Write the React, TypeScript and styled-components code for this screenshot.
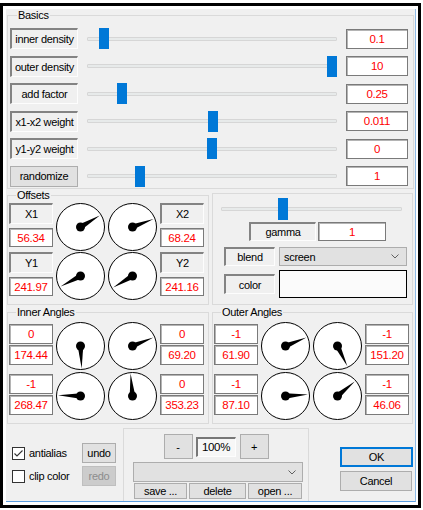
import { Fragment } from 'react';
import styled, { createGlobalStyle } from 'styled-components';

const GlobalStyle = createGlobalStyle`
  html, body { margin: 0; padding: 0; background: #fff; }
  body {
    font-family: "Liberation Sans", Arial, sans-serif;
    font-size: 11px;
    letter-spacing: -0.3px;
    color: #000;
  }
  * { box-sizing: border-box; }
`;

type SliderRow = { label: string; pos: number; value: string; button?: boolean };
type DialRow = { left: [string, string]; dials: [number, number]; right: [string, string] };

const basics: SliderRow[] = [
  { label: 'inner density', pos: 0.05, value: '0.1' },
  { label: 'outer density', pos: 1, value: '10' },
  { label: 'add factor', pos: 0.125, value: '0.25' },
  { label: 'x1-x2 weight', pos: 0.504, value: '0.011' },
  { label: 'y1-y2 weight', pos: 0.5, value: '0' },
  { label: 'randomize', pos: 0.2, value: '1', button: true },
];

const offsets: DialRow[] = [
  { left: ['X1', '56.34'], dials: [31, 21], right: ['X2', '68.24'] },
  { left: ['Y1', '241.97'], dials: [208, 211], right: ['Y2', '241.16'] },
];

const innerAngles: DialRow[] = [
  { left: ['0', '174.44'], dials: [273, 22], right: ['0', '69.20'] },
  { left: ['-1', '268.47'], dials: [178, 95], right: ['0', '353.23'] },
];

const outerAngles: DialRow[] = [
  { left: ['-1', '61.90'], dials: [22, 296], right: ['-1', '151.20'] },
  { left: ['-1', '87.10'], dials: [4, 40], right: ['-1', '46.06'] },
];

function Slider({ pos, height }: { pos: number; height: number }) {
  return (
    <SliderBox $h={height}>
      <Track />
      <Thumb $h={height} style={{ left: `calc(${pos} * (100% - 10px))` }} />
    </SliderBox>
  );
}

function Dial({ angle }: { angle: number }) {
  const cx = 24.5;
  const cy = 24;
  const rad = (angle * Math.PI) / 180;
  const dx = Math.cos(rad);
  const dy = -Math.sin(rad);
  const len = 22.5;
  const w = 2.8;
  const pts = [
    [cx - dy * w, cy + dx * w],
    [cx + dx * len, cy + dy * len],
    [cx + dy * w, cy - dx * w],
  ];
  return (
    <svg width={49} height={48} viewBox="0 0 49 48">
      <ellipse cx={cx} cy={cy} rx={24} ry={23.5} fill="#fff" stroke="#000" strokeWidth={1} />
      <polygon points={pts.map(p => p.join(',')).join(' ')} fill="#000" />
      <circle cx={cx} cy={cy} r={4.5} fill="#000" />
    </svg>
  );
}

function Chevron() {
  return (
    <svg width={8} height={5} viewBox="0 0 8 5">
      <path d="M0.5 0.5 L4 4 L7.5 0.5" fill="none" stroke="#606060" strokeWidth={1} />
    </svg>
  );
}

function DialBlock({ rows, captioned }: { rows: DialRow[]; captioned: boolean }) {
  const stack = (pair: [string, string]) =>
    captioned ? (
      <BoxStack $gap={4} $top={0}>
        <Caption $h={21}>{pair[0]}</Caption>
        <Readout $h={19}>{pair[1]}</Readout>
      </BoxStack>
    ) : (
      <BoxStack $gap={1} $top={2}>
        <Readout $h={20}>{pair[0]}</Readout>
        <Readout $h={20}>{pair[1]}</Readout>
      </BoxStack>
    );
  return (
    <DialGrid $rowGap={captioned ? 1 : 2}>
      {rows.map((row, i) => (
        <Fragment key={i}>
          {stack(row.left)}
          <Dial angle={row.dials[0]} />
          <Dial angle={row.dials[1]} />
          {stack(row.right)}
        </Fragment>
      ))}
    </DialGrid>
  );
}

export default function App() {
  return (
    <>
      <GlobalStyle />
      <Frame>
        <Panel>
          <Group>
            <Legend>Basics</Legend>
            <BasicsGrid>
              {basics.map(row => (
                <Fragment key={row.label}>
                  {row.button ? (
                    <PushButton $h={21}>{row.label}</PushButton>
                  ) : (
                    <Caption $h={21}>{row.label}</Caption>
                  )}
                  <Slider pos={row.pos} height={21} />
                  <Readout $h={20}>{row.value}</Readout>
                </Fragment>
              ))}
            </BasicsGrid>
          </Group>

          <SplitRow>
            <Group $w={202} $pad="1px 0 4px 1px">
              <Legend>Offsets</Legend>
              <DialBlock rows={offsets} captioned />
            </Group>
            <Group $w={201} $pad="4px 10px 0 8px" $mt={4}>
              <Slider pos={0.333} height={22} />
              <GammaRow>
                <Caption $h={19} $w={67}>gamma</Caption>
                <Readout $h={19} $w={68}>1</Readout>
              </GammaRow>
              <PairRow $mt={6} $h={19}>
                <Caption $h={19}>blend</Caption>
                <Select $h={19} $pr={7}>
                  <span>screen</span>
                  <Chevron />
                </Select>
              </PairRow>
              <PairRow $mt={4} $h={28}>
                <Caption $h={20}>color</Caption>
                <Swatch />
              </PairRow>
            </Group>
          </SplitRow>

          <SplitRow $mt={1}>
            <Group $w={202} $pad="3px 0 3px 1px">
              <Legend>Inner Angles</Legend>
              <DialBlock rows={innerAngles} captioned={false} />
            </Group>
            <Group $w={201} $pad="3px 0 3px 1px">
              <Legend>Outer Angles</Legend>
              <DialBlock rows={outerAngles} captioned={false} />
            </Group>
          </SplitRow>

          <BottomRow>
            <Options>
              <CheckLine>
                <CheckBox>
                  <svg width={11} height={11} viewBox="0 0 11 11">
                    <path d="M1.5 5.5 L4 8 L9.5 2.5" fill="none" stroke="#333" strokeWidth={1.1} />
                  </svg>
                </CheckBox>
                antialias
              </CheckLine>
              <PushButton $h={20}>undo</PushButton>
              <CheckLine>
                <CheckBox />
                clip color
              </CheckLine>
              <PushButton $h={20} $disabled>redo</PushButton>
            </Options>

            <Presets>
              <ZoomRow>
                <PushButton $h={25} $w={29}>-</PushButton>
                <ZoomField>100%</ZoomField>
                <PushButton $h={25} $w={29}>+</PushButton>
              </ZoomRow>
              <Select $h={20} $pr={6} $m="3px 5px 0 9px">
                <span />
                <Chevron />
              </Select>
              <FileButtons>
                <PushButton $h={16}>save ...</PushButton>
                <PushButton $h={16}>delete</PushButton>
                <PushButton $h={16}>open ...</PushButton>
              </FileButtons>
            </Presets>

            <Actions>
              <PushButton $h={20} $w={73} $default>OK</PushButton>
              <PushButton $h={20} $w={72}>Cancel</PushButton>
            </Actions>
          </BottomRow>
        </Panel>
      </Frame>
    </>
  );
}

const Frame = styled.div`
  width: 421px;
  height: 505px;
  margin-top: 3px;
  border: 3px solid #000;
  background: #fff;
  padding: 3px 2px 3px 3px;
  display: flex;
`;

const Panel = styled.div`
  flex: 1;
  display: flex;
  flex-direction: column;
  background: #f0f0f0;
  border-right: 1px solid #8fbbe6;
  border-bottom: 1px solid #5b9de0;
  padding: 0 1px 0 1px;
`;

const Group = styled.fieldset<{ $w?: number; $pad?: string; $mt?: number }>`
  margin: ${p => p.$mt ?? 0}px 0 0 0;
  min-width: 0;
  width: ${p => (p.$w ? `${p.$w}px` : 'auto')};
  padding: ${p => p.$pad ?? '6px 0 1.5px 2px'};
  border: 1px solid #dadada;
`;

const Legend = styled.legend`
  margin-left: 7px;
  padding: 0 1px;
  font-size: 11px;
  line-height: 13px;
`;

const BasicsGrid = styled.div`
  display: grid;
  grid-template-columns: 68px 250px 62px;
  grid-auto-rows: 21px;
  column-gap: 9px;
  row-gap: 6.5px;
  align-items: center;
`;

const SplitRow = styled.div<{ $mt?: number }>`
  display: flex;
  gap: 3px;
  margin-top: ${p => p.$mt ?? 0}px;
`;

const Caption = styled.div<{ $h: number; $w?: number }>`
  height: ${p => p.$h}px;
  width: ${p => (p.$w ? `${p.$w}px` : 'auto')};
  border-style: solid;
  border-width: 2px 1px 1px 2px;
  border-color: #838383 #fdfdfd #fdfdfd #838383;
  background: #f0f0f0;
  display: flex;
  align-items: center;
  justify-content: center;
  white-space: nowrap;
`;

const Readout = styled.div<{ $h: number; $w?: number }>`
  height: ${p => p.$h}px;
  width: ${p => (p.$w ? `${p.$w}px` : 'auto')};
  background: #fff;
  border: 1px solid #7a7a7a;
  box-shadow: inset 1px 1px 0 #b4b4b4;
  color: #ff0000;
  font-size: 11.5px;
  display: flex;
  align-items: center;
  justify-content: center;
`;

const PushButton = styled.button<{ $h: number; $w?: number; $disabled?: boolean; $default?: boolean }>`
  height: ${p => p.$h}px;
  width: ${p => (p.$w ? `${p.$w}px` : 'auto')};
  margin: 0;
  padding: 0;
  font: inherit;
  letter-spacing: inherit;
  color: ${p => (p.$disabled ? '#8d8d8d' : '#000')};
  background: ${p => (p.$disabled ? '#cccccc' : '#e1e1e1')};
  border: 1px solid ${p => (p.$default ? '#0078d7' : p.$disabled ? '#bfbfbf' : '#adadad')};
  box-shadow: ${p => (p.$default ? 'inset 0 0 0 1px #0078d7' : 'none')};
  display: flex;
  align-items: center;
  justify-content: center;
  white-space: nowrap;
`;

const SliderBox = styled.div<{ $h: number }>`
  position: relative;
  height: ${p => p.$h}px;
`;

const Track = styled.div`
  position: absolute;
  left: 0;
  right: 0;
  top: 50%;
  height: 4px;
  margin-top: -2px;
  background: #e7eaea;
  border: 1px solid #d6d6d6;
  border-radius: 1px;
`;

const Thumb = styled.div<{ $h: number }>`
  position: absolute;
  top: 0;
  width: 10px;
  height: ${p => p.$h}px;
  background: #0078d7;
`;

const DialGrid = styled.div<{ $rowGap: number }>`
  display: grid;
  grid-template-columns: 44px 49px 49px 44px;
  grid-auto-rows: 48px;
  column-gap: 3px;
  row-gap: ${p => p.$rowGap}px;
`;

const BoxStack = styled.div<{ $gap: number; $top: number }>`
  display: flex;
  flex-direction: column;
  gap: ${p => p.$gap}px;
  padding-top: ${p => p.$top}px;
`;

const GammaRow = styled.div`
  display: flex;
  gap: 2px;
  margin: 2px 0 0 28px;
`;

const PairRow = styled.div<{ $mt: number; $h: number }>`
  display: grid;
  grid-template-columns: 51px 128px;
  column-gap: 4px;
  align-items: center;
  height: ${p => p.$h}px;
  margin: ${p => p.$mt}px 0 0 3px;
`;

const Select = styled.div<{ $h: number; $pr: number; $m?: string }>`
  height: ${p => p.$h}px;
  margin: ${p => p.$m ?? '0'};
  background: #e1e1e1;
  border: 1px solid #adadad;
  display: flex;
  align-items: center;
  justify-content: space-between;
  padding: 0 ${p => p.$pr}px 0 4px;
`;

const Swatch = styled.div`
  height: 28px;
  background: #fbfbfb;
  border: 1px solid #000;
`;

const BottomRow = styled.div`
  flex: 1;
  display: flex;
  margin-left: -1px;
  margin-right: -1px;
`;

const Options = styled.div`
  width: 117px;
  padding: 19px 0 0 6px;
  display: grid;
  grid-template-columns: 70px 34px;
  grid-template-rows: 20px 20px;
  row-gap: 3px;
  align-content: start;
`;

const CheckLine = styled.label`
  display: flex;
  align-items: center;
  gap: 4px;
  white-space: nowrap;
`;

const CheckBox = styled.span`
  width: 13px;
  height: 13px;
  border: 1px solid #333;
  background: #fff;
  display: flex;
  align-items: center;
  justify-content: center;
`;

const Presets = styled.div`
  width: 186px;
  margin-top: 4px;
  border: 1px solid #dadada;
  border-bottom: none;
  display: flex;
  flex-direction: column;
`;

const ZoomRow = styled.div`
  display: flex;
  justify-content: center;
  align-items: center;
  gap: 3px;
  margin-top: 5px;
`;

const ZoomField = styled.div`
  width: 40px;
  height: 20px;
  margin-right: 1px;
  border-style: solid;
  border-width: 2px 1px 1px 2px;
  border-color: #777 #fdfdfd #fdfdfd #777;
  background: #f7f7f7;
  display: flex;
  align-items: center;
  justify-content: center;
  font-size: 11.5px;
`;

const FileButtons = styled.div`
  display: grid;
  grid-template-columns: 53px 57px 54px;
  column-gap: 2px;
  margin: 1px 0 0 10px;
`;

const Actions = styled.div`
  flex: 1;
  padding: 23px 0 0 31px;
  display: flex;
  flex-direction: column;
  gap: 4px;
`;
